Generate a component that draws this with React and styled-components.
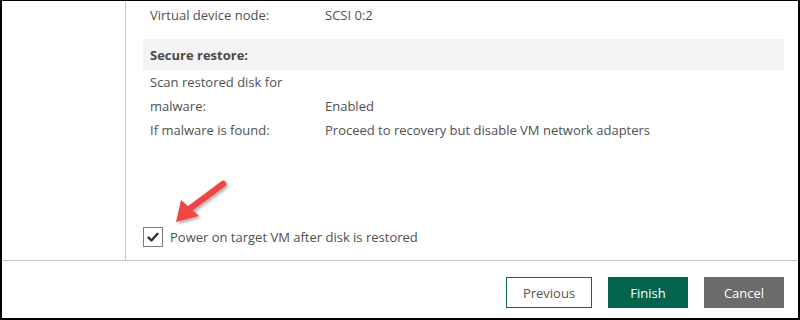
import styled, { createGlobalStyle } from "styled-components";

// 기본 스타일 초기화
const GlobalStyle = createGlobalStyle`
  html, body {
    margin: 0;
    padding: 0;
    background: #fff;
  }
  body {
    font-family: "Open Sans", "Noto Sans", sans-serif;
  }
`;

// 전체 창 테두리
const Frame = styled.div`
  width: 800px;
  height: 320px;
  box-sizing: border-box;
  border: 2px solid #000;
  border-top-width: 1px;
  display: flex;
  flex-direction: column;
  background: #fff;
  overflow: hidden;
`;

// 위쪽 본문 (사이드바 + 요약)
const Main = styled.div`
  height: 259px;
  display: flex;
`;

const Sidebar = styled.div`
  width: 124px;
  box-sizing: border-box;
  border-right: 1px solid #c6c6c6;
`;

const Content = styled.div`
  flex: 1;
  position: relative;
  display: flex;
  flex-direction: column;
  padding: 2px 14px 13px 17px;
`;

// 요약 행
const Row = styled.div`
  display: flex;
  height: 24px;
  align-items: center;
  padding-left: 7px;
  font-size: 13px;
  color: #505050;
`;

const Label = styled.span`
  width: 175px;
  flex-shrink: 0;
`;

const Value = styled.span``;

// 회색 섹션 제목
const Section = styled.div`
  margin-top: 12px;
  height: 31px;
  display: flex;
  align-items: center;
  padding-left: 7px;
  background: #f4f4f4;
  font-size: 13px;
  font-weight: 700;
  color: #4a4a4a;
`;

// 체크박스 줄
const CheckRow = styled.label`
  margin-top: auto;
  display: flex;
  align-items: center;
  gap: 7px;
  font-size: 13px;
  color: #505050;
`;

const Box = styled.span`
  width: 20px;
  height: 20px;
  box-sizing: border-box;
  border: 1px solid #7a7a7a;
  display: flex;
  align-items: center;
  justify-content: center;
  background: #fff;
`;

// 빨간 화살표 (내용 위에 겹침)
const Arrow = styled.svg`
  position: absolute;
  left: 40px;
  top: 170px;
  overflow: visible;
`;

// 하단 버튼 영역
const Footer = styled.div`
  flex: 1;
  border-top: 1px solid #c6c6c6;
  display: flex;
  justify-content: flex-end;
  align-items: flex-start;
  gap: 16px;
  padding: 16px 14px 0 0;
`;

const Btn = styled.button`
  width: ${({ $w }) => $w || 80}px;
  height: 31px;
  box-sizing: border-box;
  font-family: "Open Sans", "Noto Sans", sans-serif;
  font-size: 13px;
  border: 1px solid ${({ $bg, $line }) => $line || $bg};
  background: ${({ $bg }) => $bg || "#fff"};
  color: ${({ $color }) => $color || "#fff"};
  padding: 0;
  cursor: pointer;
`;

export default function App() {
  return (
    <>
      <GlobalStyle />
      <Frame>
        <Main>
          <Sidebar />
          <Content>
            <Row>
              <Label>Virtual device node:</Label>
              <Value>SCSI 0:2</Value>
            </Row>

            <Section>Secure restore:</Section>
            <Row>
              <Label>Scan restored disk for</Label>
            </Row>
            <Row>
              <Label>malware:</Label>
              <Value>Enabled</Value>
            </Row>
            <Row>
              <Label>If malware is found:</Label>
              <Value>Proceed to recovery but disable VM network adapters</Value>
            </Row>

            {/* 체크박스 */}
            <CheckRow>
              <Box>
                <svg width="12" height="10" viewBox="0 0 12 10">
                  <path d="M1.5 5.5 L4.5 8.5 L10.5 1.8" fill="none" stroke="#2f2f2f" strokeWidth="2.4" strokeLinecap="round" strokeLinejoin="round" />
                </svg>
              </Box>
              Power on target VM after disk is restored
            </CheckRow>

            <Arrow width="60" height="50" viewBox="0 0 60 50">
              <defs>
                <filter id="sh" x="-30%" y="-30%" width="160%" height="160%">
                  <feDropShadow dx="2" dy="2" stdDeviation="1.5" floodColor="#000" floodOpacity="0.3" />
                </filter>
              </defs>
              <g filter="url(#sh)">
                <line x1="57" y1="13" x2="22" y2="39" stroke="#f04545" strokeWidth="6.5" strokeLinecap="round" />
                <polygon points="10,51 15,29 33,45" fill="#f04545" />
              </g>
            </Arrow>
          </Content>
        </Main>

        <Footer>
          <Btn $w={86} $bg="#fff" $line="#0b6a50" $color="#555">Previous</Btn>
          <Btn $bg="#03644d">Finish</Btn>
          <Btn $bg="#6b6b6b">Cancel</Btn>
        </Footer>
      </Frame>
    </>
  );
}
